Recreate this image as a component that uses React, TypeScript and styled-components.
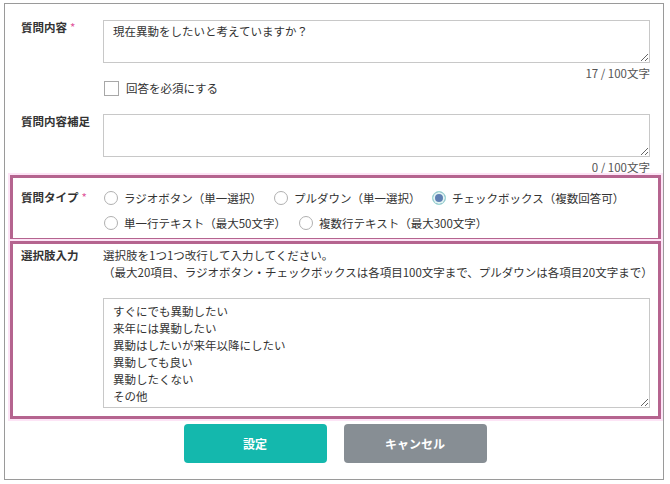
import React from "react";
import styled, { createGlobalStyle } from "styled-components";

const GlobalStyle = createGlobalStyle`
  body {
    margin: 0;
    background: #ffffff;
    font-family: "Noto Sans CJK JP", "Noto Sans", sans-serif;
    color: #333333;
    font-size: 11.5px;
  }
`;

const Panel = styled.div`
  box-sizing: border-box;
  width: 660px;
  margin: 3px 0 0 4px;
  border: 1px solid #9a9a9a;
  padding: 16px 0 16px 0;
`;

const Row = styled.div`
  display: grid;
  grid-template-columns: 82px 547px;
  padding-left: 16px;
`;

const HighlightBox = styled.div<{ $pad: string }>`
  box-sizing: border-box;
  width: 651px;
  margin-left: 5px;
  border: 3px solid #b5648f;
  box-shadow: 0 0 0 2px #fde4f6;
  padding: ${p => p.$pad};
  display: grid;
  grid-template-columns: 82px 547px;
  position: relative;
`;

const Label = styled.div<{ $lh?: number }>`
  font-weight: bold;
  font-size: 11.5px;
  line-height: ${p => p.$lh ?? 14}px;
  color: #333333;
  white-space: nowrap;
`;

const Required = styled.span`
  color: #e0559a;
  margin-left: 3px;
  font-weight: normal;
`;

const Field = styled.div`
  display: flex;
  flex-direction: column;
`;

const TextArea = styled.textarea<{ $h: number }>`
  box-sizing: border-box;
  width: 547px;
  height: ${p => p.$h}px;
  border: 1px solid #c8c8c8;
  border-radius: 0;
  padding: 4px 9px;
  font-family: "Noto Sans CJK JP", "Noto Sans", sans-serif;
  font-size: 11.5px;
  line-height: 17px;
  color: #333333;
  resize: both;
  outline: none;
  margin: 0;
`;

const Counter = styled.div<{ $mb?: number }>`
  text-align: right;
  font-size: 11.5px;
  line-height: 14px;
  color: #555555;
  margin-top: 3px;
  margin-bottom: ${p => p.$mb ?? 0}px;
`;

const CheckRow = styled.label`
  display: flex;
  align-items: center;
  gap: 7px;
  height: 15px;
  margin-top: 1px;
  margin-bottom: 18px;
  font-size: 11.5px;
  line-height: 15px;
`;

const CheckBox = styled.span`
  box-sizing: border-box;
  width: 15px;
  height: 15px;
  border: 1px solid #a8a8a8;
  background: #ffffff;
  margin-left: 1px;
`;

const RadioLine = styled.div`
  display: flex;
  align-items: center;
  height: 25px;
  margin-left: 1px;
`;

const RadioItem = styled.label<{ $w: number }>`
  display: flex;
  align-items: center;
  gap: 6px;
  width: ${p => p.$w}px;
  white-space: nowrap;
  font-size: 11.5px;
`;

const RadioCircle = styled.span<{ $checked?: boolean }>`
  box-sizing: border-box;
  width: 14px;
  height: 14px;
  border-radius: 50%;
  flex: none;
  border: 1px solid ${p => (p.$checked ? "#9fdcd4" : "#b0b0b0")};
  background: ${p => (p.$checked ? "#5f7fb3" : "#ffffff")};
  box-shadow: ${p => (p.$checked ? "inset 0 0 0 2px #e2f5f2" : "none")};
`;

const HelpText = styled.div`
  font-size: 11.5px;
  line-height: 17px;
  white-space: nowrap;
  margin-bottom: 17px;
`;

const ButtonBar = styled.div`
  display: flex;
  justify-content: center;
  gap: 17px;
  margin-top: 5px;
  padding-left: 2px;
`;

const Button = styled.button<{ $variant: "primary" | "cancel" }>`
  width: 143px;
  height: 39px;
  border: none;
  border-radius: 4px;
  background: ${p => (p.$variant === "primary" ? "#14b8ad" : "#878e94")};
  color: #ffffff;
  font-family: "Noto Sans CJK JP", "Noto Sans", sans-serif;
  font-weight: bold;
  font-size: 12px;
  cursor: pointer;
`;

const choices = [
  "すぐにでも異動したい",
  "来年には異動したい",
  "異動はしたいが来年以降にしたい",
  "異動しても良い",
  "異動したくない",
  "その他",
].join("\n");

export default function App() {
  return (
    <>
      <GlobalStyle />
      <Panel>
        <Row>
          <Label>
            質問内容<Required>*</Required>
          </Label>
          <Field>
            <TextArea $h={43} defaultValue="現在異動をしたいと考えていますか？" style={{ paddingTop: 2 }} />
            <Counter>17 / 100文字</Counter>
            <CheckRow>
              <CheckBox />
              回答を必須にする
            </CheckRow>
          </Field>
        </Row>
        <Row>
          <Label>質問内容補足</Label>
          <Field>
            <TextArea $h={43} defaultValue="" />
            <Counter $mb={1}>0 / 100文字</Counter>
          </Field>
        </Row>
        <HighlightBox $pad="7px 8px 3px 8px">
          <Label $lh={25}>
            質問タイプ<Required>*</Required>
          </Label>
          <Field>
            <RadioLine>
              <RadioItem $w={170}>
                <RadioCircle />
                ラジオボタン（単一選択）
              </RadioItem>
              <RadioItem $w={158}>
                <RadioCircle />
                プルダウン（単一選択）
              </RadioItem>
              <RadioItem $w={200}>
                <RadioCircle $checked />
                チェックボックス（複数回答可）
              </RadioItem>
            </RadioLine>
            <RadioLine>
              <RadioItem $w={195}>
                <RadioCircle />
                単一行テキスト（最大50文字）
              </RadioItem>
              <RadioItem $w={200}>
                <RadioCircle />
                複数行テキスト（最大300文字）
              </RadioItem>
            </RadioLine>
          </Field>
        </HighlightBox>
        <HighlightBox $pad="3px 8px 8px 8px">
          <Label $lh={17}>選択肢入力</Label>
          <Field>
            <HelpText>
              選択肢を1つ1つ改行して入力してください。
              <br />
              （最大20項目、ラジオボタン・チェックボックスは各項目100文字まで、プルダウンは各項目20文字まで）
            </HelpText>
            <TextArea $h={110} defaultValue={choices} />
          </Field>
        </HighlightBox>
        <ButtonBar>
          <Button $variant="primary">設定</Button>
          <Button $variant="cancel">キャンセル</Button>
        </ButtonBar>
      </Panel>
    </>
  );
}
